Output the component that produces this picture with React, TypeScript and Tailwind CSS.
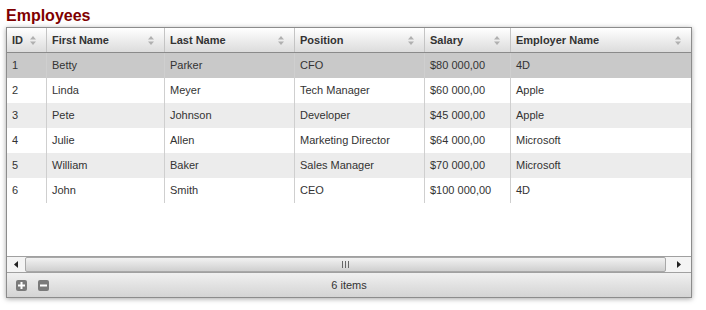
import React from 'react';

const COLUMNS = [
  { key: 'id', label: 'ID', width: 40 },
  { key: 'first', label: 'First Name', width: 118 },
  { key: 'last', label: 'Last Name', width: 130 },
  { key: 'position', label: 'Position', width: 130 },
  { key: 'salary', label: 'Salary', width: 86 },
  { key: 'employer', label: 'Employer Name', width: 180 },
];

const ROWS = [
  { id: '1', first: 'Betty', last: 'Parker', position: 'CFO', salary: '$80 000,00', employer: '4D' },
  { id: '2', first: 'Linda', last: 'Meyer', position: 'Tech Manager', salary: '$60 000,00', employer: 'Apple' },
  { id: '3', first: 'Pete', last: 'Johnson', position: 'Developer', salary: '$45 000,00', employer: 'Apple' },
  { id: '4', first: 'Julie', last: 'Allen', position: 'Marketing Director', salary: '$64 000,00', employer: 'Microsoft' },
  { id: '5', first: 'William', last: 'Baker', position: 'Sales Manager', salary: '$70 000,00', employer: 'Microsoft' },
  { id: '6', first: 'John', last: 'Smith', position: 'CEO', salary: '$100 000,00', employer: '4D' },
];

function SortIcon() {
  return (
    <svg width="6" height="9" viewBox="0 0 6 9" className="shrink-0">
      <path d="M3 0 L6 3.5 L0 3.5 Z" fill="#b0b0b0" />
      <path d="M0 5.5 L6 5.5 L3 9 Z" fill="#b0b0b0" />
    </svg>
  );
}

export default function App() {
  return (
    <div className="w-[706px] h-[310px] bg-white pl-[6px] font-['Liberation_Sans',Arial,sans-serif]">
      <div className="h-[27px] pt-[6px] text-[16px] leading-[20px] font-bold text-[#7f0000]">Employees</div>

      <div className="w-[686px] h-[271px] border border-[#8c8c8c] flex flex-col shadow-[0_1px_5px_rgba(0,0,0,0.35)]">
        {/* header */}
        <div className="flex h-[25px] border-b border-[#8a8a8a] bg-gradient-to-b from-[#ffffff] to-[#dcdcdc]">
          {COLUMNS.map((c, i) => (
            <div
              key={c.key}
              style={{ width: c.width }}
              className={`flex items-center justify-between pl-[5px] pr-[10px] text-[11px] font-bold text-[#333] ${
                i < COLUMNS.length - 1 ? 'border-r border-[#c4c4c4]' : ''
              }`}
            >
              <span>{c.label}</span>
              <SortIcon />
            </div>
          ))}
        </div>

        {/* body */}
        <div className="flex-1 flex flex-col">
          {ROWS.map((r, ri) => (
            <div
              key={r.id}
              className={`flex h-[25px] ${ri === 0 ? 'bg-[#c9c9c9]' : ri % 2 === 0 ? 'bg-[#ececec]' : 'bg-white'}`}
            >
              {COLUMNS.map((c, i) => (
                <div
                  key={c.key}
                  style={{ width: c.width }}
                  className={`flex items-center pl-[5px] text-[11px] text-[#333] whitespace-nowrap ${
                    i < COLUMNS.length - 1 ? 'border-r border-[#cfcfcf]' : ''
                  }`}
                >
                  {(r as Record<string, string>)[c.key]}
                </div>
              ))}
            </div>
          ))}
        </div>

        {/* horizontal scrollbar */}
        <div className="h-[16px] flex border-t border-[#a0a0a0] bg-[#f4f4f4]">
          <div className="w-[18px] flex items-center justify-center">
            <svg width="4" height="7" viewBox="0 0 4 7">
              <path d="M4 0 L0 3.5 L4 7 Z" fill="#222" />
            </svg>
          </div>
          <div className="w-[641px] h-[15px] rounded-[2px] border border-[#a8a8a8] bg-gradient-to-b from-[#f2f2f2] to-[#cfcfcf] flex items-center justify-center">
            <svg width="7" height="7" viewBox="0 0 7 7">
              <rect x="0" y="0" width="1" height="7" fill="#666" />
              <rect x="3" y="0" width="1" height="7" fill="#666" />
              <rect x="6" y="0" width="1" height="7" fill="#666" />
            </svg>
          </div>
          <div className="flex-1 flex items-center justify-center">
            <svg width="4" height="7" viewBox="0 0 4 7">
              <path d="M0 0 L4 3.5 L0 7 Z" fill="#222" />
            </svg>
          </div>
        </div>

        {/* footer */}
        <div className="h-[25px] relative flex items-center border-t border-[#a0a0a0] bg-gradient-to-b from-[#f0f0f0] to-[#d4d4d4]">
          <div className="flex items-center gap-[11px] pl-[9px]">
            <svg width="11" height="11" viewBox="0 0 11 11">
              <rect x="0" y="0" width="11" height="11" rx="2" fill="#7a7a7a" />
              <rect x="2" y="4.5" width="7" height="2" fill="#fff" />
              <rect x="4.5" y="2" width="2" height="7" fill="#fff" />
            </svg>
            <svg width="11" height="11" viewBox="0 0 11 11">
              <rect x="0" y="0" width="11" height="11" rx="2" fill="#7a7a7a" />
              <rect x="2" y="4.5" width="7" height="2" fill="#fff" />
            </svg>
          </div>
          <div className="absolute left-0 right-0 text-center text-[11px] text-[#333] pointer-events-none">6 items</div>
        </div>
      </div>
    </div>
  );
}
